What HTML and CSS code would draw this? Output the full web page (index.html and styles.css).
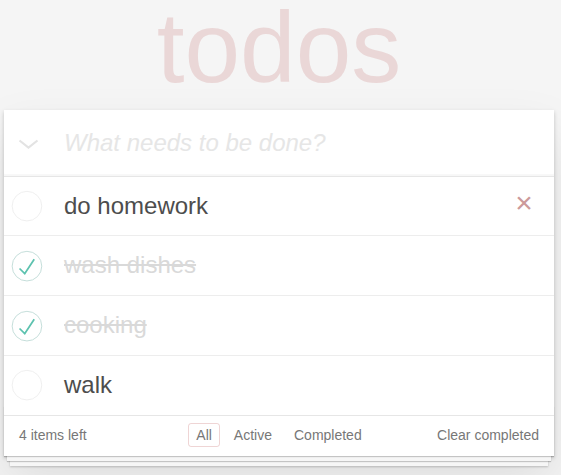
FILE: index.html
```html
<!DOCTYPE html>
<html lang="en">
<head>
<meta charset="utf-8">
<title>TodoMVC</title>
<link rel="stylesheet" href="styles.css">
</head>
<body>
<div class="page">
  <h1 class="title">todos</h1>
  <section class="todoapp">
    <header class="header">
      <span class="toggle-all">
        <svg class="chevron" width="22" height="10" viewBox="0 0 22 10"><polyline points="1.5,1.5 10.5,8.5 19.5,1.5" fill="none" stroke="#e3e3e3" stroke-width="2.2"/></svg>
      </span>
      <input class="new-todo" placeholder="What needs to be done?">
    </header>
    <section class="main">
      <ul class="todo-list">
        <li class="todo">
          <svg class="toggle" width="40" height="40" viewBox="-10 -18 100 135"><circle cx="50" cy="50" r="50" fill="none" stroke="#ededed" stroke-width="3"/></svg>
          <label class="todo-label">do homework</label>
          <button class="destroy">×</button>
        </li>
        <li class="todo">
          <svg class="toggle" width="40" height="40" viewBox="-10 -18 100 135"><circle cx="50" cy="50" r="50" fill="none" stroke="#bddad5" stroke-width="3"/><path fill="#5dc2af" d="M72 25L42 71 27 56l-4 4 20 20 34-52z"/></svg>
          <label class="todo-label done">wash dishes</label>
        </li>
        <li class="todo">
          <svg class="toggle" width="40" height="40" viewBox="-10 -18 100 135"><circle cx="50" cy="50" r="50" fill="none" stroke="#bddad5" stroke-width="3"/><path fill="#5dc2af" d="M72 25L42 71 27 56l-4 4 20 20 34-52z"/></svg>
          <label class="todo-label done">cooking</label>
        </li>
        <li class="todo">
          <svg class="toggle" width="40" height="40" viewBox="-10 -18 100 135"><circle cx="50" cy="50" r="50" fill="none" stroke="#ededed" stroke-width="3"/></svg>
          <label class="todo-label">walk</label>
        </li>
      </ul>
    </section>
    <footer class="footer">
      <span class="todo-count">4 items left</span>
      <ul class="filters">
        <li><a class="filter selected" href="#/">All</a></li>
        <li><a class="filter" href="#/active">Active</a></li>
        <li><a class="filter" href="#/completed">Completed</a></li>
      </ul>
      <button class="clear-completed">Clear completed</button>
    </footer>
  </section>
</div>
</body>
</html>
```

FILE: styles.css
```css
html, body {
  margin: 0;
  padding: 0;
}

body {
  font: 14px/1.4em "Liberation Sans", Arial, sans-serif;
  color: #4d4d4d;
  background: #f5f5f5;
}

.page {
  width: 550px;
  margin: 0 0 40px 4px;
}

.title {
  margin: 0 0 15px;
  font-size: 100px;
  font-weight: 100;
  line-height: 95px;
  text-align: center;
  color: rgba(175, 47, 47, 0.15);
}

.todoapp {
  position: relative;
  background: #fff;
  box-shadow: 0 2px 4px 0 rgba(0, 0, 0, 0.2), 0 25px 50px 0 rgba(0, 0, 0, 0.1);
}

.header {
  display: flex;
  align-items: center;
  box-shadow: inset 0 -2px 1px rgba(0, 0, 0, 0.03);
}

.toggle-all {
  display: flex;
  align-items: center;
  width: 60px;
  flex: none;
}

.chevron {
  display: block;
  margin: 3px 0 0 14px;
}

.new-todo {
  flex: 1;
  min-width: 0;
  box-sizing: border-box;
  height: 65.6px;
  margin: 0;
  padding: 0 16px 0 0;
  border: none;
  outline: none;
  background: transparent;
  font-family: inherit;
  font-size: 24px;
  line-height: 1.4em;
  color: inherit;
}

.new-todo::placeholder {
  font-style: italic;
  color: #e6e6e6;
}

.main {
  position: relative;
  z-index: 2;
  border-top: 1px solid #e6e6e6;
}

.todo-list {
  margin: 0;
  padding: 0;
  list-style: none;
}

.todo {
  display: flex;
  align-items: center;
  font-size: 24px;
  border-bottom: 1px solid #ededed;
}

.todo:last-child {
  border-bottom: none;
}

.toggle {
  flex: none;
  display: block;
}

.todo-label {
  flex: 1;
  padding: 15px 0 15px 20px;
  line-height: 1.2;
  color: #4d4d4d;
  word-break: break-all;
}

.todo-label.done {
  color: #d9d9d9;
  text-decoration: line-through;
}

.destroy {
  flex: none;
  width: 40px;
  height: 40px;
  margin: 0 10px 6px 0;
  padding: 0;
  border: 0;
  background: none;
  font-family: inherit;
  font-size: 30px;
  line-height: 40px;
  color: #cc9a9a;
}

.footer {
  position: relative;
  display: grid;
  grid-template-columns: 1fr auto 1fr;
  align-items: center;
  height: 20px;
  padding: 9px 15px 11px;
  color: #777;
  border-top: 1px solid #e6e6e6;
}

.footer::before {
  content: '';
  position: absolute;
  right: 0;
  bottom: 0;
  left: 0;
  height: 50px;
  overflow: hidden;
  box-shadow: 0 1px 1px rgba(0, 0, 0, 0.2),
              0 8px 0 -3px #f6f6f6,
              0 9px 1px -3px rgba(0, 0, 0, 0.2),
              0 16px 0 -6px #f6f6f6,
              0 17px 2px -6px rgba(0, 0, 0, 0.2);
}

.todo-count {
  justify-self: start;
  line-height: 20px;
}

.filters {
  display: flex;
  margin: 0;
  padding: 0;
  list-style: none;
  line-height: 20px;
}

.filter {
  margin: 3px;
  padding: 3px 7px;
  color: inherit;
  text-decoration: none;
  border: 1px solid transparent;
  border-radius: 3px;
}

.filter.selected {
  border-color: rgba(175, 47, 47, 0.2);
}

.clear-completed {
  justify-self: end;
  position: relative;
  margin: 0;
  padding: 0;
  border: 0;
  background: none;
  font-family: inherit;
  font-size: 14px;
  line-height: 20px;
  color: #777;
  cursor: pointer;
}
```
